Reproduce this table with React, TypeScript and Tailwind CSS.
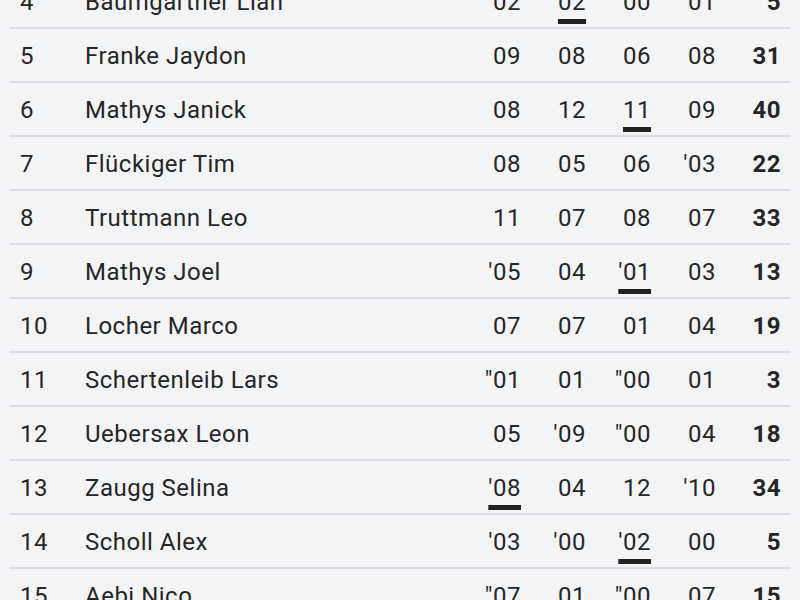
type Score = { v: string; u?: boolean };

interface Row {
  rank: number;
  name: string;
  scores: Score[];
  total: number;
}

const s = (v: string, u = false): Score => ({ v, u });

const rows: Row[] = [
  { rank: 4, name: 'Baumgartner Lian', scores: [s('02'), s('02', true), s('00'), s('01')], total: 5 },
  { rank: 5, name: 'Franke Jaydon', scores: [s('09'), s('08'), s('06'), s('08')], total: 31 },
  { rank: 6, name: 'Mathys Janick', scores: [s('08'), s('12'), s('11', true), s('09')], total: 40 },
  { rank: 7, name: 'Flückiger Tim', scores: [s('08'), s('05'), s('06'), s("'03")], total: 22 },
  { rank: 8, name: 'Truttmann Leo', scores: [s('11'), s('07'), s('08'), s('07')], total: 33 },
  { rank: 9, name: 'Mathys Joel', scores: [s("'05"), s('04'), s("'01", true), s('03')], total: 13 },
  { rank: 10, name: 'Locher Marco', scores: [s('07'), s('07'), s('01'), s('04')], total: 19 },
  { rank: 11, name: 'Schertenleib Lars', scores: [s('"01'), s('01'), s('"00'), s('01')], total: 3 },
  { rank: 12, name: 'Uebersax Leon', scores: [s('05'), s("'09"), s('"00'), s('04')], total: 18 },
  { rank: 13, name: 'Zaugg Selina', scores: [s("'08", true), s('04'), s('12'), s("'10")], total: 34 },
  { rank: 14, name: 'Scholl Alex', scores: [s("'03"), s("'00"), s("'02", true), s('00')], total: 5 },
  { rank: 15, name: 'Aebi Nico', scores: [s('"07'), s('01'), s('"00'), s('07')], total: 15 },
];

export default function App() {
  return (
    <div className="h-[600px] w-[800px] overflow-hidden bg-[#f3f4f6] font-['Roboto',sans-serif] text-[24px] tracking-[0.5px] text-[#262626]">
      <div className="mx-[10px] -mt-[25px] flex flex-col">
        {rows.map((r) => (
          <div key={r.rank} className="flex h-[54px] items-center border-b-2 border-[#dcdee3] pt-[1px]">
            <div className="w-[75px] pl-[10px]">{r.rank}</div>
            <div className="flex-1">{r.name}</div>
            {r.scores.map((sc, i) => (
              <div key={i} className="w-[65px] pr-[9px] text-right">
                <span
                  className={
                    sc.u
                      ? 'underline decoration-[#222] decoration-[5px] underline-offset-[9px]'
                      : ''
                  }
                >
                  {sc.v}
                </span>
              </div>
            ))}
            <div className="w-[65px] pr-[9px] text-right font-bold">{r.total}</div>
          </div>
        ))}
      </div>
    </div>
  );
}
